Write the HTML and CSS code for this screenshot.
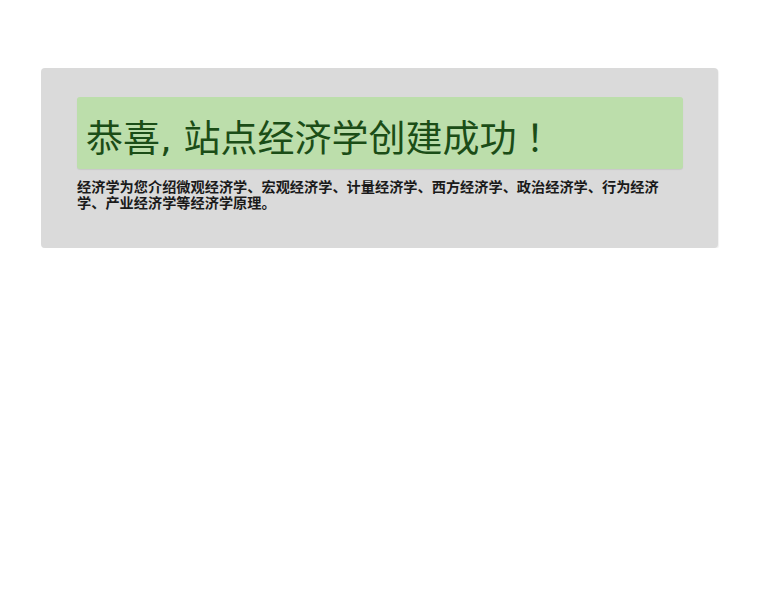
FILE: index.html
```html
<!DOCTYPE html>
<html lang="zh">
<head>
<meta charset="utf-8">
<title>经济学</title>
<link rel="stylesheet" href="styles.css">
</head>
<body>
<div class="panel">
  <h1 class="notice">恭喜, 站点经济学创建成功<span class="bang" lang="ja">！</span></h1>
  <p class="intro">经济学为您介绍微观经济学、宏观经济学、计量经济学、西方经济学、政治经济学、行为经济学、产业经济学等经济学原理。</p>
</div>
</body>
</html>
```

FILE: styles.css
```css
html, body {
  margin: 0;
  padding: 0;
  background: #ffffff;
}
body {
  font-family: "DejaVu Sans", "Noto Sans CJK SC", sans-serif;
}
.panel {
  box-sizing: border-box;
  margin: 68px 42px 0 41px;
  height: 180px;
  padding: 29px 35px 0 36px;
  background: #dadada;
  border-radius: 4px;
  box-shadow: 1px 1px 1px rgba(0,0,0,0.06);
}
.notice {
  box-sizing: border-box;
  margin: 0;
  height: 72px;
  padding: 6px 9px 0 9px;
  background: #bcdeab;
  color: #1b4d17;
  border-radius: 3px;
  box-shadow: 0 1px 1px rgba(0,0,0,0.08);
  font-size: 37px;
  font-weight: normal;
  line-height: 66px;
  white-space: nowrap;
}
.bang {
  font-family: "Noto Sans CJK JP", sans-serif;
}
.intro {
  margin: 10px 0 0 0;
  padding-right: 22px;
  font-size: 14.2px;
  line-height: 16px;
  font-weight: bold;
  color: #1a1a1a;
}
```
